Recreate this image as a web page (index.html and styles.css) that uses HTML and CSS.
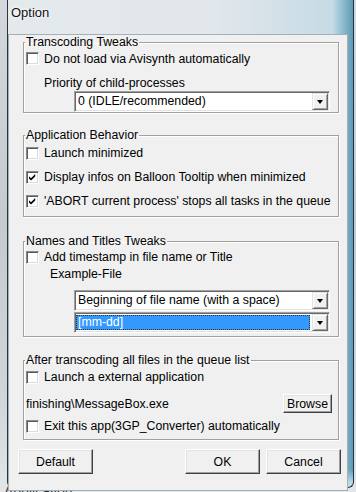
FILE: index.html
```html
<!DOCTYPE html>
<html lang="en">
<head>
    <meta charset="UTF-8">
    <title>Option</title>
    <link rel="stylesheet" href="styles.css">
</head>
<body>
    <div class="desk-text">Application</div>
    <div class="window">
        <div class="titlebar">Option</div>
        <div class="client">
            <fieldset class="group g1">
                <legend>Transcoding Tweaks</legend>
                <div class="check r-first"><span class="box"></span>Do not load via Avisynth automatically</div>
                <div class="label prio">Priority of child-processes</div>
                <div class="combo"><span class="value">0 (IDLE/recommended)</span><span class="drop"></span></div>
            </fieldset>

            <fieldset class="group g2">
                <legend>Application Behavior</legend>
                <div class="check row"><span class="box"></span>Launch minimized</div>
                <div class="check row"><span class="box on"><svg viewBox="0 0 9 9"><path d="M1 3.2 L3 5.2 L7.2 1 L7.2 3.4 L3 7.6 L1 5.6 Z"/></svg></span>Display infos on Balloon Tooltip when minimized</div>
                <div class="check row"><span class="box on"><svg viewBox="0 0 9 9"><path d="M1 3.2 L3 5.2 L7.2 1 L7.2 3.4 L3 7.6 L1 5.6 Z"/></svg></span>'ABORT current process' stops all tasks in the queue</div>
            </fieldset>

            <fieldset class="group g3">
                <legend>Names and Titles Tweaks</legend>
                <div class="check r-stamp"><span class="box"></span>Add timestamp in file name or Title</div>
                <div class="label example">Example-File</div>
                <div class="combo c-first"><span class="value">Beginning of file name (with a space)</span><span class="drop"></span></div>
                <div class="combo c-second"><span class="value sel">[mm-dd]</span><span class="drop"></span></div>
            </fieldset>

            <fieldset class="group g4">
                <legend>After transcoding all files in the queue list</legend>
                <div class="check r-launch"><span class="box"></span>Launch a external application</div>
                <div class="file-row">
                    <span>finishing\MessageBox.exe</span>
                    <button class="btn browse">Browse</button>
                </div>
                <div class="check r-exit"><span class="box"></span>Exit this app(3GP_Converter) automatically</div>
            </fieldset>

            <div class="buttons">
                <button class="btn">Default</button>
                <span class="spacer"></span>
                <button class="btn">OK</button>
                <button class="btn">Cancel</button>
            </div>
        </div>
    </div>
</body>
</html>
```

FILE: styles.css
```css
* { box-sizing: border-box; }
body { margin: 0; width: 356px; height: 492px; overflow: hidden; position: relative; background: linear-gradient(to bottom, #d3d8dc 0%, #c4cacf 45%, #cfd5d9 80%, #e2e6e8 100%); font-family: 'Liberation Sans', Arial, sans-serif; font-size: 12.3px; color: #000; }
.desk-text { position: absolute; left: 4px; top: 483px; font-size: 14px; line-height: 16px; color: #2b2f33; }

.window { position: relative; margin-left: 7px; width: 347px; height: 488px; padding-left: 1px; border: 1px solid #26343e; border-top: none; border-radius: 0 0 6px 6px; background: linear-gradient(to bottom, rgba(184, 214, 228, 0) 0, rgba(184, 214, 228, 0) 470px, #b3d3e2 481px, #cfe3ec 487px), linear-gradient(to right, #e4e9ec 0%, #e1e7eb 60%, #c6dbe5 94%, #8ebdd1 97%, #5d9ab4 100%); }
.titlebar { height: 25px; padding: 6px 0 0 2px; font-size: 13px; line-height: 14px; color: #111; text-shadow: 0 0 6px #fff, 0 0 3px #fff; }
.client { width: 338px; height: 455px; background: #f0f0f0; box-shadow: 0 0 0 1px #a3b0b8; padding: 0 6px 0 14px; }

.group { margin: 0; padding: 0 0 0 2px; width: 316px; border: 1px solid #a0a0a0; box-shadow: 1px 1px 0 #fff, inset 1px 1px 0 #fff; }
.group legend { padding: 0 1px; margin-left: -1px; line-height: 15px; }
.g1 { margin-top: 10px; padding-bottom: 0; }
.g2 { margin-top: 15px; padding-bottom: 5px; }
.g3 { margin-top: 17px; padding-bottom: 3px; }
.g4 { margin-top: 16px; padding-bottom: 4px; }

.check { display: flex; align-items: center; white-space: nowrap; }
.box { flex: none; width: 13px; height: 13px; margin-right: 5px; background: #fff; border: 1px solid; border-color: #8a8a8a #fff #fff #8a8a8a; box-shadow: inset 1px 1px 0 #5a5a5a, inset -1px -1px 0 #dcdcdc; display: flex; align-items: center; justify-content: center; }
.box svg { width: 9px; height: 9px; fill: #000; }

.r-first { height: 17px; }
.prio { height: 16px; margin-top: 8px; padding-left: 18px; line-height: 16px; }
.row { height: 20px; }
.row + .row { margin-top: 4px; }
.r-stamp { height: 16px; }
.example { height: 16px; margin-top: 1px; padding-left: 24px; line-height: 16px; }
.r-launch { height: 18px; }
.r-exit { height: 18px; margin-top: 4px; }

.combo { display: flex; width: 256px; height: 21px; margin-left: 48px; background: #fff; border: 1px solid; border-color: #a0a0a0 #fff #fff #a0a0a0; box-shadow: inset 1px 1px 0 #696969, inset -1px -1px 0 #e3e3e3; }
.c-first { margin-top: 8px; }
.c-second { margin-top: 1px; }
.combo .value { flex: 1; margin: 1px; padding-left: 2px; line-height: 17px; white-space: nowrap; overflow: hidden; }
.combo .value.sel { background: #3399ff; color: #fff; margin: 2px 2px 2px 1px; line-height: 15px; outline: 1px dotted #333; outline-offset: -1px; }
.drop { flex: none; width: 16px; margin: 1px 1px 1px 0; background: #f0f0f0; border: 1px solid; border-color: #e3e3e3 #696969 #696969 #e3e3e3; box-shadow: inset 1px 1px 0 #fff, inset -1px -1px 0 #a0a0a0; display: flex; align-items: center; justify-content: center; }
.drop::after { content: ""; width: 0; height: 0; margin-top: 1px; border-top: 4px solid #000; border-left: 3.5px solid transparent; border-right: 3.5px solid transparent; }

.file-row { display: flex; align-items: center; justify-content: space-between; height: 19px; margin-top: 8px; padding-right: 6px; white-space: nowrap; }

.btn { width: 75px; height: 25px; padding: 0; font-family: inherit; font-size: 12.3px; color: #000; background: #f0f0f0; border: 1px solid; border-color: #fff #404040 #404040 #fff; box-shadow: inset -1px -1px 0 #a0a0a0, inset 1px 1px 0 #e3e3e3; }
.btn.browse { width: 49px; height: 19px; }

.buttons { display: flex; gap: 6px; margin-top: 9px; margin-left: -5px; }
.spacer { flex: 1; }
```
